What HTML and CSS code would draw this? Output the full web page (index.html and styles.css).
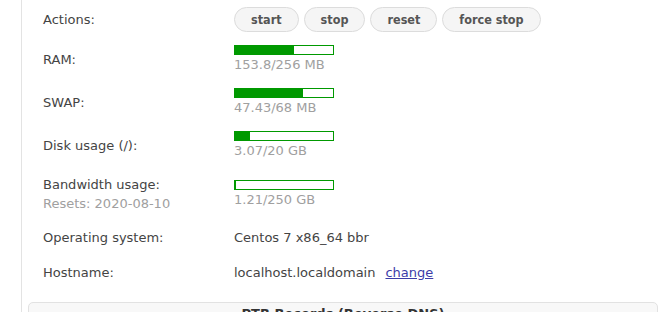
FILE: index.html
```html
<!DOCTYPE html>
<html lang="en">

<head>
	<meta charset="UTF-8">
	<meta name="viewport" content="width=device-width, initial-scale=1.0">
	<title>Server Info</title>

	<link rel="stylesheet" href="styles.css">
</head>

<body>
	<div class="panel">
		<table class="info">
			<tr class="actions">
				<td class="label">Actions:</td>
				<td>
					<div class="buttons">
						<button type="button" class="btn">start</button>
						<button type="button" class="btn">stop</button>
						<button type="button" class="btn">reset</button>
						<button type="button" class="btn">force stop</button>
					</div>
				</td>
			</tr>
			<tr class="usage">
				<td class="label">RAM:</td>
				<td>
					<div class="bar"><div class="fill" style="width: 60.08%"></div></div>
					<div class="amount">153.8/256 MB</div>
				</td>
			</tr>
			<tr class="usage">
				<td class="label">SWAP:</td>
				<td>
					<div class="bar"><div class="fill" style="width: 69.75%"></div></div>
					<div class="amount">47.43/68 MB</div>
				</td>
			</tr>
			<tr class="usage">
				<td class="label">Disk usage (/):</td>
				<td>
					<div class="bar"><div class="fill" style="width: 15.35%"></div></div>
					<div class="amount">3.07/20 GB</div>
				</td>
			</tr>
			<tr class="bandwidth">
				<td class="label">
					Bandwidth usage:
					<div class="note">Resets: 2020-08-10</div>
				</td>
				<td>
					<div class="bar"><div class="fill" style="width: 0.48%"></div></div>
					<div class="amount">1.21/250 GB</div>
				</td>
			</tr>
			<tr>
				<td class="label">Operating system:</td>
				<td>Centos 7 x86_64 bbr</td>
			</tr>
			<tr>
				<td class="label">Hostname:</td>
				<td>localhost.localdomain<a href="#" class="change">change</a></td>
			</tr>
		</table>

		<div class="box">
			<h3>PTR Records (Reverse DNS)</h3>
		</div>
	</div>
</body>

</html>
```

FILE: styles.css
```css
body {
	margin: 0;
	background-color: #fff;
	font-family: "DejaVu Sans", Verdana, sans-serif;
	font-size: 13px;
	color: #444;
	overflow: hidden;
}

.panel {
	margin-left: 21px;
	padding: 0 5px 0 6px;
	border-left: 1px solid #e3e3e3;
	min-height: 312px;
}

.info {
	border-collapse: collapse;
	margin-left: 15px;
}

.info td {
	padding: 8px 0;
	line-height: 19px;
	vertical-align: middle;
}

.info .label {
	width: 191px;
}

.info .actions td {
	padding: 7px 0 6px 0;
}

.info .usage td {
	padding: 7px 0;
}

.info .bandwidth td {
	padding: 8px 0 7px 0;
}

.buttons {
	display: flex;
	gap: 5px;
}

.btn {
	font-family: "DejaVu Sans Condensed", "DejaVu Sans", sans-serif;
	font-weight: bold;
	font-size: 12.5px;
	line-height: 14px;
	color: #555;
	background: #f5f5f5;
	border: 1px solid #dcdcdc;
	border-radius: 13px;
	padding: 5px 16px 4px 16px;
	margin: 0;
}

.bar {
	width: 100px;
	height: 10px;
	box-sizing: border-box;
	border: 1px solid #090;
	background: #fff;
}

.fill {
	height: 100%;
	background: #090;
}

.amount {
	color: #a0a0a0;
}

.note {
	color: #a0a0a0;
}

.change {
	margin-left: 10px;
	color: #3c3ca8;
	text-decoration: underline;
}

.box {
	margin-top: 12px;
	border: 1px solid #e2e2e2;
	border-radius: 5px;
	background: #f8f8f8;
	height: 60px;
}

.box h3 {
	margin: 0;
	padding-top: 1px;
	font-size: 13px;
	line-height: 19px;
	text-align: center;
	color: #333;
}
```
